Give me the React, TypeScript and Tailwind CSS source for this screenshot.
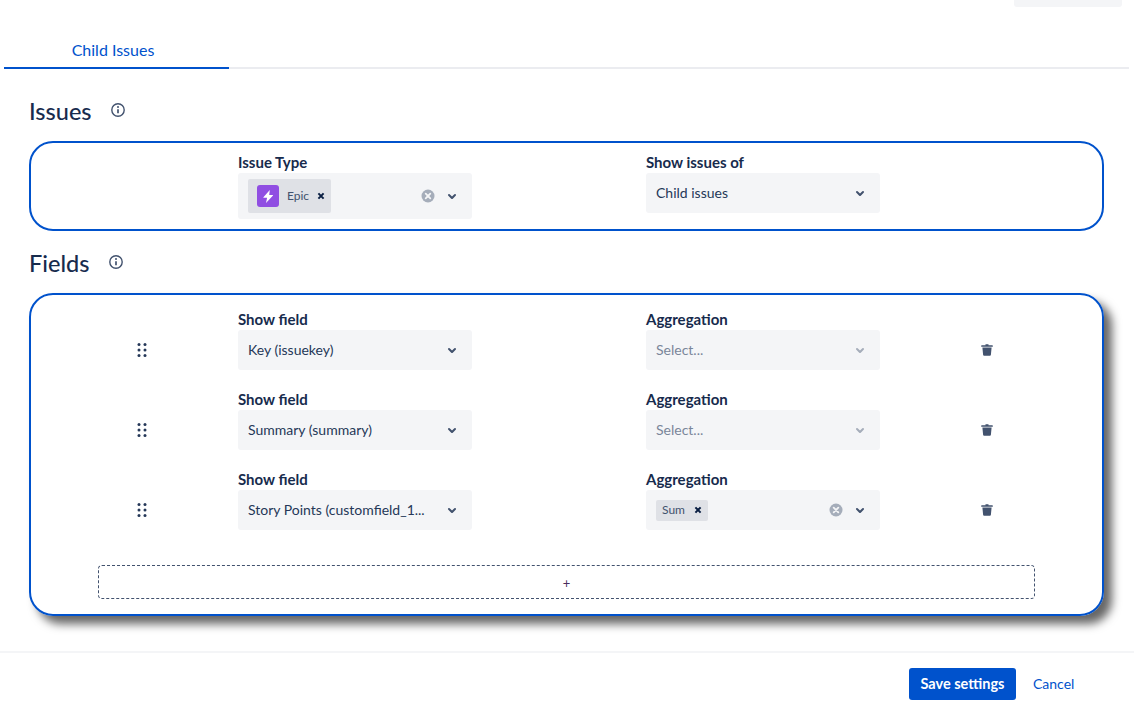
import type { ReactNode } from "react";

const FONT = "font-['Lato','Noto_Sans',sans-serif]";

function Chevron({ muted = false }: { muted?: boolean }) {
  return (
    <svg viewBox="0 0 24 24" className={`h-6 w-6 ${muted ? "text-[#a5adba]" : "text-[#42526e]"}`} fill="currentColor">
      <path d="M8.292 10.293a1.009 1.009 0 000 1.419l2.939 2.965c.218.215.5.322.779.322s.556-.107.769-.322l2.93-2.955a1.01 1.01 0 000-1.419.987.987 0 00-1.406 0l-2.298 2.317-2.307-2.327a.99.99 0 00-1.406 0z" />
    </svg>
  );
}

function ClearIcon() {
  return (
    <svg viewBox="0 0 16 16" className="h-4 w-4 text-[#a5adba]">
      <circle cx="8" cy="8" r="6.5" fill="currentColor" />
      <path d="M5.7 5.7l4.6 4.6M10.3 5.7l-4.6 4.6" stroke="#f4f5f7" strokeWidth="1.8" strokeLinecap="round" />
    </svg>
  );
}

function TagClose() {
  return (
    <svg viewBox="0 0 8 8" className="h-2 w-2 text-[#091e42]">
      <path d="M1.4 1.4l5.2 5.2M6.6 1.4L1.4 6.6" stroke="currentColor" strokeWidth="2" />
    </svg>
  );
}

function InfoIcon() {
  return (
    <svg viewBox="0 0 16 16" className="h-4 w-4 text-[#42526e]" fill="none">
      <circle cx="8" cy="8" r="6.2" stroke="currentColor" strokeWidth="1.4" />
      <circle cx="8" cy="5.1" r="1" fill="currentColor" />
      <path d="M8 7.2v4" stroke="currentColor" strokeWidth="1.7" />
    </svg>
  );
}

function DragIcon() {
  return (
    <svg viewBox="0 0 10 16" className="h-4 w-[10px] text-[#253858]" fill="currentColor">
      <circle cx="2" cy="2.5" r="1.5" />
      <circle cx="8" cy="2.5" r="1.5" />
      <circle cx="2" cy="8" r="1.5" />
      <circle cx="8" cy="8" r="1.5" />
      <circle cx="2" cy="13.5" r="1.5" />
      <circle cx="8" cy="13.5" r="1.5" />
    </svg>
  );
}

function TrashIcon() {
  return (
    <svg viewBox="0 0 12 12" className="h-3 w-3 text-[#42526e]" fill="currentColor">
      <path d="M4.5 0.3h3v1h3.8a.5.5 0 01.5.5v1H.2v-1a.5.5 0 01.5-.5h3.8z" />
      <path d="M1.4 3.4h9.2l-.7 7.4a1 1 0 01-1 .9H3.1a1 1 0 01-1-.9z" />
    </svg>
  );
}

function EpicIcon() {
  return (
    <div className="flex h-[22px] w-[22px] items-center justify-center rounded-[3px] bg-[#904ee2]">
      <svg viewBox="0 0 10.5 13" className="h-[13px] w-[10.5px]" fill="#fff">
        <path d="M6.8 0L0.4 7.3a.3.3 0 00.2.5h3.5L3 13l7-7.4a.3.3 0 00-.2-.5H6.2z" />
      </svg>
    </div>
  );
}

function Field({ label, className = "h-10", children }: { label: string; className?: string; children: ReactNode }) {
  return (
    <div className="w-[234px] shrink-0">
      <div className="h-5 text-[15px] leading-[18px] font-bold text-[#172b4d]">{label}</div>
      <div className={`flex items-center rounded-[3px] bg-[#f4f5f7] pr-2 ${className}`}>{children}</div>
    </div>
  );
}

function SelectValue({ text, placeholder = false }: { text: string; placeholder?: boolean }) {
  return (
    <>
      <span className={`flex-1 truncate pb-[2px] pl-[10px] text-[14px] ${placeholder ? "text-[#7a869a]" : "text-[#253858]"}`}>{text}</span>
      <Chevron muted={placeholder} />
    </>
  );
}

function FieldRow({ field, children }: { field: string; children: ReactNode }) {
  return (
    <div className="flex h-[60px] items-start">
      <div className="flex h-[60px] w-[207px] shrink-0 items-center pt-5 pl-[106px]">
        <DragIcon />
      </div>
      <Field label="Show field">
        <SelectValue text={field} />
      </Field>
      <div className="w-[174px] shrink-0" />
      <Field label="Aggregation">{children}</Field>
      <div className="flex h-[60px] items-center pt-5 pl-[101px]">
        <TrashIcon />
      </div>
    </div>
  );
}

export default function App() {
  return (
    <div className={`flex h-[711px] flex-col overflow-hidden bg-white ${FONT}`}>
      <div className="mr-3 flex h-[7px] justify-end">
        <div className="w-[108px] rounded-b-[3px] bg-[#f4f5f7]" />
      </div>

      <div className="mt-[25px] ml-1 mr-[5px] flex h-[37px] border-b-2 border-[#ebecf0]">
        <div className="-mb-[2px] w-[225px] border-b-2 border-[#0052cc] pt-[8px] pr-[7px] text-center text-[16px] leading-5 text-[#0052cc]">
          Child Issues
        </div>
      </div>

      <div className="mt-[25px] flex h-[34px] items-center pl-[29px]">
        <h2 className="text-[23.5px] leading-8 font-medium text-[#172b4d]">Issues</h2>
        <span className="-mt-[2px] ml-[18px]">
          <InfoIcon />
        </span>
      </div>

      <div className="mt-[13px] ml-[29px] flex h-[90px] w-[1075px] rounded-[24px] border-2 border-[#0052cc] pt-[10px]">
        <div className="w-[207px] shrink-0" />
        <Field label="Issue Type" className="h-[46px]">
          <div className="ml-[10px] flex h-[34px] items-center rounded-[2px] bg-[#dfe1e6] pr-[6px] pl-[9px]">
            <EpicIcon />
            <span className="ml-[8px] text-[12px] text-[#42526e]">Epic</span>
            <span className="ml-[8px] flex">
              <TagClose />
            </span>
          </div>
          <div className="flex-1" />
          <ClearIcon />
          <span className="ml-[4px]">
            <Chevron />
          </span>
        </Field>
        <div className="w-[174px] shrink-0" />
        <Field label="Show issues of">
          <SelectValue text="Child issues" />
        </Field>
      </div>

      <div className="mt-[15px] flex h-[34px] items-center pl-[29px]">
        <h2 className="text-[23.5px] leading-8 font-medium text-[#172b4d]">Fields</h2>
        <span className="-mt-[2px] ml-[19px]">
          <InfoIcon />
        </span>
      </div>

      <div className="mt-[13px] ml-[29px] flex h-[323px] w-[1075px] flex-col gap-5 rounded-[24px] border-2 border-[#0052cc] pt-[15px] shadow-[8px_8px_10px_#666]">
        <FieldRow field="Key (issuekey)">
          <SelectValue text="Select..." placeholder />
        </FieldRow>
        <FieldRow field="Summary (summary)">
          <SelectValue text="Select..." placeholder />
        </FieldRow>
        <FieldRow field="Story Points (customfield_1...">
          <div className="ml-[10px] flex h-[21px] items-center rounded-[2px] bg-[#dfe1e6] pr-[6px] pl-[6px]">
            <span className="text-[12px] text-[#42526e]">Sum</span>
            <span className="ml-[9px] flex">
              <TagClose />
            </span>
          </div>
          <div className="flex-1" />
          <ClearIcon />
          <span className="ml-[4px]">
            <Chevron />
          </span>
        </FieldRow>
        <div className="mt-[15px] ml-[67px] flex h-[34px] w-[937px] items-center justify-center rounded-[4px] border border-dashed border-[#42526e] pt-[4px] text-[13px] text-[#4a2c5e]">
          +
        </div>
      </div>

      <div className="mt-[35px] flex h-[60px] items-start justify-end border-t-2 border-[#f4f5f7] pt-[15px] pr-[59px]">
        <button className="h-8 w-[107px] rounded-[3px] bg-[#0052cc] text-[14.5px] font-bold text-white">Save settings</button>
        <span className="ml-[17px] w-[42px] text-[14px] leading-8 text-[#0052cc]">Cancel</span>
      </div>
    </div>
  );
}
